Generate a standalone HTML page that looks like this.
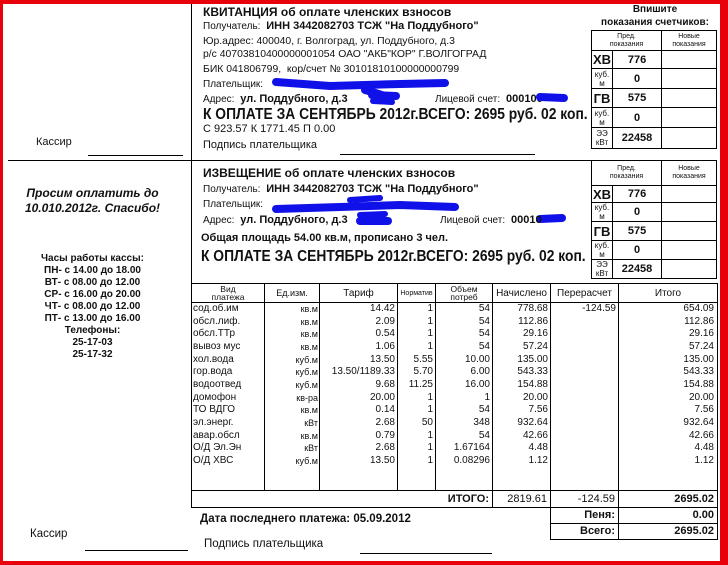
<!DOCTYPE html>
<html><head><meta charset="utf-8"><style>
*{margin:0;padding:0;box-sizing:border-box}
body{width:728px;height:565px;background:#fff;position:relative;overflow:hidden;font-family:"Liberation Sans",Arial,sans-serif;color:#111;font-size:10px}
.a{position:absolute;white-space:nowrap;line-height:1}
.b{font-weight:bold}
.hl{position:absolute;background:#000;height:1px}
.vl{position:absolute;background:#000;width:1px}
.c{text-align:center}
.r{text-align:right}
.big{font-size:15.3px;transform:scaleX(0.905);transform-origin:0 0}
table{border-collapse:collapse;position:absolute;table-layout:fixed}
td{border:1px solid #000;padding:0;overflow:hidden;white-space:nowrap}
</style></head><body>
<!-- red frame -->
<div style="position:absolute;left:0;top:0;width:728px;height:4px;background:#e8000b"></div>
<div style="position:absolute;left:0;top:0;width:3px;height:565px;background:#e8000b"></div>
<div style="position:absolute;left:720px;top:0;width:8px;height:565px;background:#e8000b"></div>
<div style="position:absolute;left:0;top:561px;width:728px;height:4px;background:#e8000b"></div>

<div class="vl" style="left:191px;top:4px;height:503px"></div>
<div class="hl" style="left:8px;top:160px;width:709px"></div>

<!-- top section -->
<div class="a b" style="left:203px;top:6px;font-size:12px">КВИТАНЦИЯ об оплате членских взносов</div>
<div class="a" style="left:203px;top:21px">Получатель: <b style="font-size:11px">&nbsp;ИНН 3442082703 ТСЖ "На Поддубного"</b></div>
<div class="a" style="left:203px;top:37px;font-size:10.4px">Юр.адрес: 400040, г. Волгоград, ул. Поддубного, д.3</div>
<div class="a" style="left:203px;top:50px;font-size:10.4px">р/с 40703810400000001054 ОАО "АКБ"КОР" Г.ВОЛГОГРАД</div>
<div class="a" style="left:203px;top:65px;font-size:10.4px">БИК 041806799,&nbsp; кор/счет № 30101810100000000799</div>
<div class="a" style="left:203px;top:80px">Плательщик:</div>
<div class="a" style="left:203px;top:94px">Адрес: <b style="font-size:11px">&nbsp;ул. Поддубного, д.3</b></div>
<div class="a" style="left:435px;top:94px">Лицевой счет: <b style="font-size:11px">&nbsp;000100</b></div>
<div class="a b big" style="left:203px;top:107px">К ОПЛАТЕ ЗА СЕНТЯБРЬ 2012г.ВСЕГО: 2695 руб. 02 коп.</div>
<div class="a" style="left:203px;top:124px;font-size:11px">С 923.57 К 1771.45 П 0.00</div>
<div class="a" style="left:203px;top:140px;font-size:11px">Подпись плательщика</div>
<div class="hl" style="left:340px;top:154px;width:195px"></div>
<div class="a" style="left:36px;top:137px;font-size:11px">Кассир</div>
<div class="hl" style="left:88px;top:155px;width:95px"></div>

<div class="a b c" style="left:595px;top:3px;width:120px;line-height:13px">Впишите<br>показания счетчиков:</div>

<!-- scribbles -->
<svg style="position:absolute;left:0;top:0" width="728" height="565">
<g stroke="#1010e8" stroke-linecap="round" fill="none">
<path d="M276 82 L330 86 L400 84 L445 83" stroke-width="8"/>
<path d="M365 90 Q380 94 390 98 M372 95 L396 96" stroke-width="8"/>
<path d="M373 101 L392 102" stroke-width="6"/>
<path d="M540 97 L564 98" stroke-width="8"/>
<path d="M276 209 L340 207 L400 205 L455 207" stroke-width="8"/>
<path d="M350 200 L380 198 M360 215 L385 214" stroke-width="6"/>
<path d="M360 221 L388 221" stroke-width="8"/>
<path d="M540 219 L562 218" stroke-width="8"/>
</g></svg>

<!-- meter tables -->
<table style="left:591px;top:30px;width:125px">
<colgroup><col style="width:21px"><col style="width:49px"><col style="width:55px"></colgroup>
<tr style="height:20px"><td colspan="2" class="c" style="font-size:7px;line-height:8px">Пред.<br>показания</td><td class="c" style="font-size:7px;line-height:8px">Новые<br>показания</td></tr>
<tr style="height:18px"><td class="b c" style="font-size:13px">ХВ</td><td class="b c" style="font-size:11px">776</td><td></td></tr>
<tr style="height:20px"><td class="c" style="font-size:8px;line-height:9px">куб.<br>м</td><td class="b c" style="font-size:11px">0</td><td></td></tr>
<tr style="height:19px"><td class="b c" style="font-size:13px">ГВ</td><td class="b c" style="font-size:11px">575</td><td></td></tr>
<tr style="height:20px"><td class="c" style="font-size:8px;line-height:9px">куб.<br>м</td><td class="b c" style="font-size:11px">0</td><td></td></tr>
<tr style="height:21px"><td class="c" style="font-size:8px;line-height:9px">ЭЭ<br>кВт</td><td class="b c" style="font-size:11px">22458</td><td></td></tr>
</table>
<table style="left:591px;top:160px;width:125px">
<colgroup><col style="width:21px"><col style="width:49px"><col style="width:55px"></colgroup>
<tr style="height:25px"><td colspan="2" class="c" style="font-size:7px;line-height:8px">Пред.<br>показания</td><td class="c" style="font-size:7px;line-height:8px">Новые<br>показания</td></tr>
<tr style="height:17px"><td class="b c" style="font-size:13px">ХВ</td><td class="b c" style="font-size:11px">776</td><td></td></tr>
<tr style="height:19px"><td class="c" style="font-size:8px;line-height:9px">куб.<br>м</td><td class="b c" style="font-size:11px">0</td><td></td></tr>
<tr style="height:19px"><td class="b c" style="font-size:13px">ГВ</td><td class="b c" style="font-size:11px">575</td><td></td></tr>
<tr style="height:19px"><td class="c" style="font-size:8px;line-height:9px">куб.<br>м</td><td class="b c" style="font-size:11px">0</td><td></td></tr>
<tr style="height:18px"><td class="c" style="font-size:8px;line-height:9px">ЭЭ<br>кВт</td><td class="b c" style="font-size:11px">22458</td><td></td></tr>
</table>

<!-- second section -->
<div class="a b" style="left:203px;top:167px;font-size:12px">ИЗВЕЩЕНИЕ об оплате членских взносов</div>
<div class="a" style="left:203px;top:184px">Получатель: <b style="font-size:11px">&nbsp;ИНН 3442082703 ТСЖ "На Поддубного"</b></div>
<div class="a" style="left:203px;top:200px">Плательщик:</div>
<div class="a" style="left:203px;top:215px">Адрес: <b style="font-size:11px">&nbsp;ул. Поддубного, д.3</b></div>
<div class="a" style="left:440px;top:215px">Лицевой счет: <b style="font-size:11px">&nbsp;00010</b></div>
<div class="a b" style="left:201px;top:233px;font-size:11px">Общая площадь 54.00 кв.м, прописано 3 чел.</div>
<div class="a b big" style="left:201px;top:249px">К ОПЛАТЕ ЗА СЕНТЯБРЬ 2012г.ВСЕГО: 2695 руб. 02 коп.</div>

<!-- left info -->
<div class="a b c" style="left:0;top:186px;width:185px;font-size:12px;font-style:italic;line-height:15px">Просим оплатить до<br>10.010.2012г. Спасибо!</div>
<div class="a b c" style="left:0;top:253px;width:185px;font-size:10px;line-height:12px">Часы работы кассы:<br>ПН- с 14.00 до 18.00<br>ВТ- с 08.00 до 12.00<br>СР- с 16.00 до 20.00<br>ЧТ- с 08.00 до 12.00<br>ПТ- с 13.00 до 16.00<br>Телефоны:<br>25-17-03<br>25-17-32</div>

<!-- main table -->
<table style="left:191px;top:283px;width:526px;font-size:10px">
<colgroup><col style="width:73px"><col style="width:55px"><col style="width:78px"><col style="width:38px"><col style="width:57px"><col style="width:58px"><col style="width:68px"><col style="width:99px"></colgroup>
<tr style="height:19px" class="c"><td style="font-size:8.5px;line-height:8.5px">Вид<br>платежа</td><td style="font-size:9px">Ед.изм.</td><td>Тариф</td><td style="font-size:7px">Норматив</td><td style="font-size:8.5px;line-height:8.5px">Объем<br>потреб</td><td>Начислено</td><td>Перерасчет</td><td>Итого</td></tr>
<tr style="height:188px;vertical-align:top">
<td style="line-height:12.65px;padding:0 1px">сод.об.им<br>обсл.лиф.<br>обсл.ТТр<br>вывоз мус<br>хол.вода<br>гор.вода<br>водоотвед<br>домофон<br>ТО ВДГО<br>эл.энерг.<br>авар.обсл<br>О/Д Эл.Эн<br>О/Д ХВС</td>
<td class="r" style="line-height:12.65px;padding:0 1px;font-size:9px">кв.м<br>кв.м<br>кв.м<br>кв.м<br>куб.м<br>куб.м<br>куб.м<br>кв-ра<br>кв.м<br>кВт<br>кв.м<br>кВт<br>куб.м</td>
<td class="r" style="line-height:12.65px;padding:0 2px">14.42<br>2.09<br>0.54<br>1.06<br>13.50<br>13.50/1189.33<br>9.68<br>20.00<br>0.14<br>2.68<br>0.79<br>2.68<br>13.50</td>
<td class="r" style="line-height:12.65px;padding:0 2px">1<br>1<br>1<br>1<br>5.55<br>5.70<br>11.25<br>1<br>1<br>50<br>1<br>1<br>1</td>
<td class="r" style="line-height:12.65px;padding:0 2px">54<br>54<br>54<br>54<br>10.00<br>6.00<br>16.00<br>1<br>54<br>348<br>54<br>1.67164<br>0.08296</td>
<td class="r" style="line-height:12.65px;padding:0 2px">778.68<br>112.86<br>29.16<br>57.24<br>135.00<br>543.33<br>154.88<br>20.00<br>7.56<br>932.64<br>42.66<br>4.48<br>1.12</td>
<td class="r" style="line-height:12.65px;padding:0 2px">-124.59</td>
<td class="r" style="line-height:12.65px;padding:0 3px">654.09<br>112.86<br>29.16<br>57.24<br>135.00<br>543.33<br>154.88<br>20.00<br>7.56<br>932.64<br>42.66<br>4.48<br>1.12</td>
</tr>
<tr style="height:17px;font-size:11px"><td colspan="5" class="r b" style="padding-right:3px">ИТОГО:</td><td class="r" style="padding-right:3px">2819.61</td><td class="r" style="padding-right:3px">-124.59</td><td class="r b" style="padding-right:3px">2695.02</td></tr>
</table>
<table style="left:550px;top:507px;width:167px;font-size:11px">
<colgroup><col style="width:68px"><col style="width:99px"></colgroup>
<tr style="height:16px"><td class="r b" style="border-top:0;padding-right:3px">Пеня:</td><td class="r b" style="border-top:0;padding-right:3px">0.00</td></tr>
<tr style="height:16px"><td class="r b" style="padding-right:3px">Всего:</td><td class="r b" style="padding-right:3px">2695.02</td></tr>
</table>

<div class="a b" style="left:200px;top:514px;font-size:11.5px">Дата последнего платежа: 05.09.2012</div>
<div class="a" style="left:204px;top:539px;font-size:11.5px">Подпись плательщика</div>
<div class="hl" style="left:360px;top:553px;width:132px"></div>
<div class="a" style="left:30px;top:529px;font-size:11.5px">Кассир</div>
<div class="hl" style="left:85px;top:550px;width:103px"></div>
</body></html>
